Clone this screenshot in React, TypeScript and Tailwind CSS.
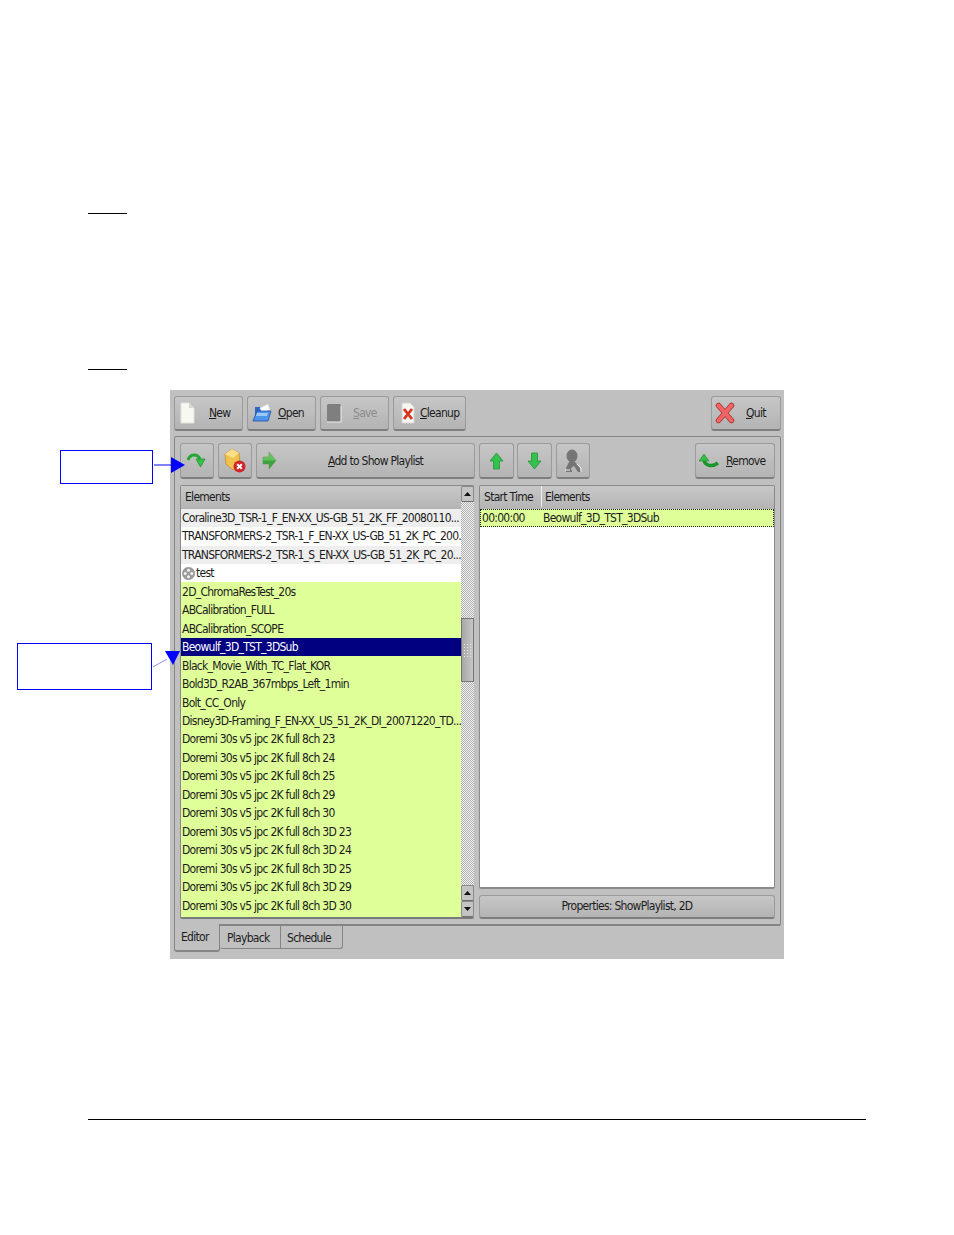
const font = "font-['DejaVu_Sans',sans-serif] [font-stretch:condensed] text-[12px] tracking-[-0.72px] text-[#1c1c1c]";

const rows = [
  { name: 'Coraline3D_TSR-1_F_EN-XX_US-GB_51_2K_FF_20080110...', kind: 'gray' },
  { name: 'TRANSFORMERS-2_TSR-1_F_EN-XX_US-GB_51_2K_PC_200...', kind: 'white' },
  { name: 'TRANSFORMERS-2_TSR-1_S_EN-XX_US-GB_51_2K_PC_20...', kind: 'gray' },
  { name: 'test', kind: 'test' },
  { name: '2D_ChromaResTest_20s', kind: 'green' },
  { name: 'ABCalibration_FULL', kind: 'green' },
  { name: 'ABCalibration_SCOPE', kind: 'green' },
  { name: 'Beowulf_3D_TST_3DSub', kind: 'selected' },
  { name: 'Black_Movie_With_TC_Flat_KOR', kind: 'green' },
  { name: 'Bold3D_R2AB_367mbps_Left_1min', kind: 'green' },
  { name: 'Bolt_CC_Only', kind: 'green' },
  { name: 'Disney3D-Framing_F_EN-XX_US_51_2K_DI_20071220_TD...', kind: 'green' },
  { name: 'Doremi 30s v5 jpc 2K full 8ch 23', kind: 'green' },
  { name: 'Doremi 30s v5 jpc 2K full 8ch 24', kind: 'green' },
  { name: 'Doremi 30s v5 jpc 2K full 8ch 25', kind: 'green' },
  { name: 'Doremi 30s v5 jpc 2K full 8ch 29', kind: 'green' },
  { name: 'Doremi 30s v5 jpc 2K full 8ch 30', kind: 'green' },
  { name: 'Doremi 30s v5 jpc 2K full 8ch 3D 23', kind: 'green' },
  { name: 'Doremi 30s v5 jpc 2K full 8ch 3D 24', kind: 'green' },
  { name: 'Doremi 30s v5 jpc 2K full 8ch 3D 25', kind: 'green' },
  { name: 'Doremi 30s v5 jpc 2K full 8ch 3D 29', kind: 'green' },
  { name: 'Doremi 30s v5 jpc 2K full 8ch 3D 30', kind: 'green' },
];

const rowBg: Record<string, string> = {
  gray: 'bg-[#eeeeee]',
  white: 'bg-white',
  test: 'bg-white',
  green: 'bg-[#dfff99]',
  selected: 'bg-[#000080] text-white',
};

const btn =
  'flex items-center rounded-[3px] border border-[#9a9a9a] border-b-2 border-b-[#7e7e7e] bg-gradient-to-b from-[#c6c6c6] to-[#b4b4b4]';

function Key({ label, rest }: { label: string; rest: string }) {
  return (
    <span>
      <span className="underline">{label}</span>
      {rest}
    </span>
  );
}

function PageIcon() {
  return (
    <svg width="15" height="22" viewBox="0 0 15 22">
      <path d="M1 1h8l5 5v15H1z" fill="#f8f8f2" stroke="#e2e2dc" />
      <path d="M9 1v5h5z" fill="#d6d6d0" />
    </svg>
  );
}

function FolderIcon() {
  return (
    <svg width="20" height="20" viewBox="0 0 20 20">
      <path d="M3 4h5l1 2h7v11H3z" fill="#2f68c4" />
      <path d="M8 5l8-4 2 6-8 3z" fill="#ffffff" stroke="#c9d6ea" strokeWidth="0.5" />
      <path d="M5 8h14l-3 10H1z" fill="#4d95ec" stroke="#1f4f9c" strokeWidth="0.8" />
      <path d="M5 10h11l-1 3H4z" fill="#9cc8f6" />
    </svg>
  );
}

function SaveIcon() {
  return (
    <svg width="16" height="20" viewBox="0 0 16 20">
      <rect x="1" y="1" width="14" height="18" rx="1.5" fill="#7f7f7f" />
      <path d="M1 19h14V3" fill="none" stroke="#efefef" />
    </svg>
  );
}

function CleanupIcon() {
  return (
    <svg width="14" height="22" viewBox="0 0 14 22">
      <path d="M1 1h8l4 4v16H1z" fill="#f6f6f2" stroke="#d4d4d4" />
      <path d="M3 7l8 10M11 7L3 17" stroke="#d8331c" strokeWidth="2.8" />
    </svg>
  );
}

function QuitIcon() {
  return (
    <svg width="20" height="22" viewBox="0 0 20 22">
      <path d="M3.5 3.5L16.5 18.5M16.5 3.5L3.5 18.5" stroke="#a83a3a" strokeWidth="5.6" strokeLinecap="round" />
      <path d="M3.5 3.5L16.5 18.5M16.5 3.5L3.5 18.5" stroke="#f06464" strokeWidth="4" strokeLinecap="round" />
    </svg>
  );
}

function RedoIcon() {
  return (
    <svg width="20" height="16" viewBox="0 0 20 16">
      <path d="M1 7C3 1 10 0 13 6" fill="none" stroke="#22a833" strokeWidth="3" />
      <path d="M9 6h9l-4.5 8z" fill="#33c244" stroke="#15801f" strokeWidth="0.6" />
    </svg>
  );
}

function RemoveElementIcon() {
  return (
    <svg width="22" height="26" viewBox="0 0 22 26">
      <path d="M1 6l7-5 7 4 1 11-7 6-7-6z" fill="#f2c24e" stroke="#b98a2a" strokeWidth="0.7" />
      <path d="M8 1l7 4-6 5-8-4z" fill="#fbdf8c" />
      <circle cx="15.5" cy="18.5" r="6" fill="#d0262a" />
      <path d="M13.2 16.2l4.6 4.6M17.8 16.2l-4.6 4.6" stroke="#ffffff" strokeWidth="2" />
    </svg>
  );
}

function RightArrowIcon() {
  return (
    <svg width="15" height="19" viewBox="0 0 15 19">
      <path d="M1 6h6V1l7 8.5L7 18v-5H1z" fill="#5cc45a" stroke="#7f9f66" strokeWidth="0.7" />
      <path d="M7 9.5h7L7 18v-5H1v-3.5z" fill="#3da243" />
    </svg>
  );
}

function UpArrowIcon() {
  return (
    <svg width="15" height="18" viewBox="0 0 15 18">
      <path d="M7.5 1L14 9h-3.5v8h-6V9H1z" fill="#33c34c" stroke="#1c8a30" strokeWidth="0.7" />
    </svg>
  );
}

function DownArrowIcon() {
  return (
    <svg width="15" height="18" viewBox="0 0 15 18">
      <path d="M7.5 17L14 9h-3.5V1h-6v8H1z" fill="#33c34c" stroke="#1c8a30" strokeWidth="0.7" />
    </svg>
  );
}

function PersonIcon() {
  return (
    <svg width="18" height="24" viewBox="0 0 18 24">
      <ellipse cx="8" cy="7" rx="5.5" ry="6.5" fill="#757575" />
      <path d="M2 23v-4l3-6h6l5 6 1 4h-3l-4-6-3 2 1 4z" fill="#757575" />
      <path d="M13 15l4 4v4M1 21h5" stroke="#f2f2f2" fill="none" />
    </svg>
  );
}

function UndoIcon() {
  return (
    <svg width="20" height="16" viewBox="0 0 20 16">
      <path d="M5 6c0 6 7 9 14 4" fill="none" stroke="#18962a" strokeWidth="3.4" />
      <path d="M0 8l5-7 5 7z" fill="#35bd46" stroke="#15801f" strokeWidth="0.5" />
    </svg>
  );
}

function ReelIcon() {
  return (
    <svg width="13" height="13" viewBox="0 0 13 13" className="mr-px shrink-0">
      <circle cx="6.5" cy="6.5" r="6.2" fill="#9c9c9c" stroke="#858585" strokeWidth="0.5" />
      <circle cx="6.5" cy="3.2" r="1.5" fill="#f2f2f2" />
      <circle cx="6.5" cy="9.8" r="1.5" fill="#f2f2f2" />
      <circle cx="3.2" cy="6.5" r="1.5" fill="#f2f2f2" />
      <circle cx="9.8" cy="6.5" r="1.5" fill="#f2f2f2" />
    </svg>
  );
}

function ScrollButton({ up }: { up?: boolean }) {
  return (
    <div className="flex h-[16px] w-[13px] shrink-0 items-center justify-center rounded-[2px] border border-[#8b8b8b] border-b-[#6f6f6f] bg-[#c4c4c4]">
      <svg width="7" height="4" viewBox="0 0 7 4">
        <path d={up ? 'M3.5 0L7 4H0z' : 'M3.5 4L7 0H0z'} fill="#111111" />
      </svg>
    </div>
  );
}

function Dither({ className }: { className: string }) {
  return (
    <div
      className={`${className} bg-[repeating-conic-gradient(#b0b0b0_0_25%,#f1f1f1_0_50%)] bg-[length:2px_2px]`}
    />
  );
}

function App() {
  return (
    <div className={`relative min-h-[1235px] bg-white pt-[213px] ${font}`}>
      <div className="ml-[88px] h-px w-[39px] bg-black" />
      <div className="ml-[88px] mt-[155px] h-px w-[39px] bg-black" />

      {/* Main window */}
      <div className="ml-[170px] mt-[20px] h-[569px] w-[614px] bg-[#c0c0c0] pl-[4px] pr-[3px] pt-[6px]">
        <div className="flex h-[35px] gap-[4px]">
          <div className={`${btn} w-[69px] pl-[5px]`}>
            <PageIcon />
            <span className="ml-[14px]"><Key label="N" rest="ew" /></span>
          </div>
          <div className={`${btn} w-[69px] pl-[4px]`}>
            <FolderIcon />
            <span className="ml-[6px]"><Key label="O" rest="pen" /></span>
          </div>
          <div className={`${btn} w-[69px] pl-[5px]`}>
            <SaveIcon />
            <span className="ml-[11px] text-[#8c8c8c]"><Key label="S" rest="ave" /></span>
          </div>
          <div className={`${btn} w-[73px] pl-[7px]`}>
            <CleanupIcon />
            <span className="ml-[5px]"><Key label="C" rest="leanup" /></span>
          </div>
          <div className={`${btn} ml-auto w-[70px] pl-[3px]`}>
            <QuitIcon />
            <span className="ml-[11px]"><Key label="Q" rest="uit" /></span>
          </div>
        </div>

        {/* Tab panel */}
        <div className="mt-[5px] h-[490px] rounded-[2px] border border-[#858585] border-b-2 pl-[5px] pr-[4px] pt-[6px]">
          <div className="flex h-[36px]">
            <div className={`${btn} w-[34px] justify-center`}>
              <RedoIcon />
            </div>
            <div className={`${btn} ml-[4px] w-[34px] justify-center`}>
              <RemoveElementIcon />
            </div>
            <div className={`${btn} ml-[4px] w-[219px] pl-[5px]`}>
              <RightArrowIcon />
              <span className="ml-[51px]"><Key label="A" rest="dd to Show Playlist" /></span>
            </div>
            <div className={`${btn} ml-[4px] w-[35px] justify-center`}>
              <UpArrowIcon />
            </div>
            <div className={`${btn} ml-[3px] w-[35px] justify-center`}>
              <DownArrowIcon />
            </div>
            <div className={`${btn} ml-[4px] w-[34px] justify-center`}>
              <PersonIcon />
            </div>
            <div className={`${btn} ml-auto mr-px w-[80px] pl-[3px]`}>
              <UndoIcon />
              <span className="ml-[7px]"><Key label="R" rest="emove" /></span>
            </div>
          </div>

          <div className="mt-[6px] flex h-[434px]">
            {/* Elements list */}
            <div className="flex h-[434px] w-[294px] rounded-[2px] border border-[#8a8a8a] border-b-2 border-b-[#7a7a7a]">
              <div className="flex w-[280px] flex-col">
                <div className="flex h-[22.6px] shrink-0 items-center bg-gradient-to-b from-[#c8c8c8] to-[#b4b4b4] pb-[1px] pl-[4px]">
                  Elements
                </div>
                <div className="flex min-h-0 flex-1 flex-col bg-[#dfff99]">
                  {rows.map((r) => (
                    <div
                      key={r.name}
                      className={`flex h-[18.48px] shrink-0 items-center whitespace-nowrap pl-[1px] ${rowBg[r.kind]}`}
                    >
                      {r.kind === 'test' && <ReelIcon />}
                      {r.name}
                    </div>
                  ))}
                </div>
              </div>
              <div className="flex w-[13px] flex-col">
                <ScrollButton up />
                <Dither className="h-[116px]" />
                <div className="flex h-[64px] shrink-0 items-center justify-center border border-[#777777] bg-gradient-to-r from-[#a8a8a8] to-[#c6c6c6]">
                  <div className="h-[14px] w-[9px] bg-[radial-gradient(#e6e6e6_1px,transparent_1px)] bg-[length:3px_3px]" />
                </div>
                <Dither className="min-h-0 flex-1" />
                <ScrollButton up />
                <ScrollButton />
              </div>
            </div>

            {/* Playlist column */}
            <div className="ml-[5px] flex w-[296px] flex-col">
              <div className="flex h-[404px] flex-col rounded-[2px] border border-[#8a8a8a] border-b-2 bg-white">
                <div className="flex h-[23px] shrink-0 items-center bg-gradient-to-b from-[#c8c8c8] to-[#b4b4b4] pb-[2px]">
                  <div className="flex h-full w-[62px] items-center border-r border-[#efefef] pl-[4px]">
                    Start Time
                  </div>
                  <div className="pl-[3px]">Elements</div>
                </div>
                <div className="flex h-[18px] items-center whitespace-nowrap border border-dotted border-[#222222] bg-[#dfff99] pl-[1px]">
                  <span className="w-[61px]">00:00:00</span>
                  Beowulf_3D_TST_3DSub
                </div>
              </div>
              <div className={`${btn} mt-[6px] h-[24px] justify-center pb-[1px]`}>
                Properties: ShowPlaylist, 2D
              </div>
            </div>
          </div>
        </div>

        {/* Tabs */}
        <div className="flex items-start">
          <div className="-mt-[2px] flex h-[28px] w-[46px] items-center rounded-b-[3px] border border-t-0 border-[#858585] border-b-2 bg-[#c0c0c0] pb-[1px] pl-[6px]">
            Editor
          </div>
          <div className="flex h-[23px] w-[61px] items-center rounded-bl-[2px] border-b border-r border-[#858585] pt-[2px] pl-[7px]">
            Playback
          </div>
          <div className="flex h-[23px] w-[62px] items-center rounded-br-[3px] border-b border-r border-[#858585] pt-[2px] pl-[6px]">
            Schedule
          </div>
        </div>
      </div>

      <div className="ml-[88px] mt-[160px] h-px w-[778px] bg-black" />

      {/* Callouts */}
      <div className="absolute left-[60px] top-[450px] h-[34px] w-[93px] border border-[#0000ff]" />
      <div className="absolute left-[17px] top-[643px] h-[47px] w-[135px] border border-[#0000ff]" />
      <svg className="absolute left-[150px] top-[450px]" width="40" height="225" viewBox="0 0 40 225">
        <path d="M4 15h22" stroke="#0000ff" />
        <path d="M21 7l14 8-14 8z" fill="#0000ff" />
        <path d="M3 217l14-8" stroke="#8f8fff" />
        <path d="M15 201h15l-7 14z" fill="#0000ff" />
      </svg>
    </div>
  );
}

export default App;
